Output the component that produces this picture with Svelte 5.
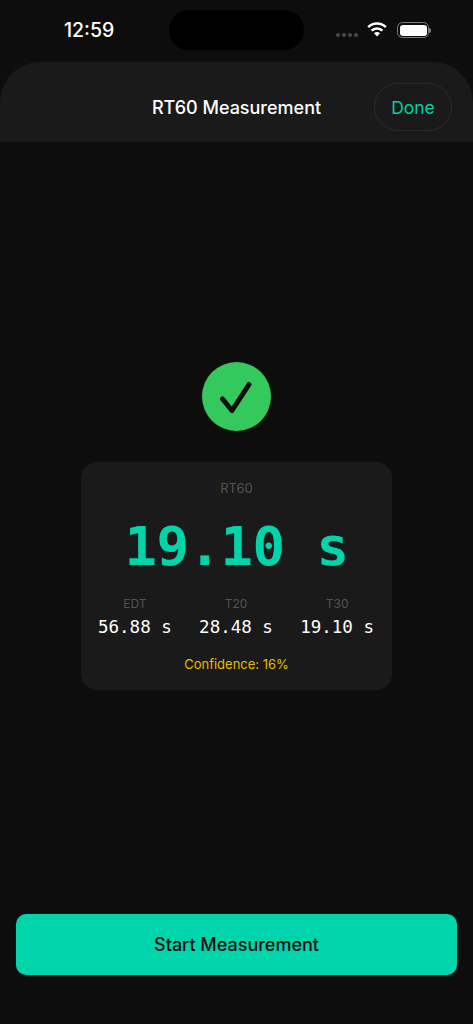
<script>
    const metrics = [
        { label: "EDT", value: "56.88 s" },
        { label: "T20", value: "28.48 s" },
        { label: "T30", value: "19.10 s" },
    ];
</script>

<div class="screen">
    <div class="status-bar">
        <span class="time">12:59</span>
        <div class="island"></div>
        <div class="status-icons">
            <div class="dots">
                <i></i><i></i><i></i><i></i>
            </div>
            <svg class="wifi" width="20" height="15" viewBox="0 0 20 15">
                <path d="M1.2 5.2a12.6 12.6 0 0 1 17.6 0" fill="none" stroke="#fff" stroke-width="2.5" />
                <path d="M4.6 8.6a7.8 7.8 0 0 1 10.8 0" fill="none" stroke="#fff" stroke-width="2.5" />
                <path d="M7 11.2a4.2 4.2 0 0 1 6 0L10 14.6z" fill="#fff" />
            </svg>
            <div class="battery">
                <div class="battery-body"><div class="battery-fill"></div></div>
                <div class="battery-cap"></div>
            </div>
        </div>
    </div>

    <header class="sheet-header">
        <h1>RT60 Measurement</h1>
        <button class="done">Done</button>
    </header>

    <main>
        <div class="check">
            <svg width="69" height="69" viewBox="0 0 69 69">
                <path d="M20.5 37l9.5 11.5L47 22.5" fill="none" stroke="#0d0d0d" stroke-width="5" stroke-linecap="round" stroke-linejoin="round" />
            </svg>
        </div>

        <section class="card">
            <div class="card-label">RT60</div>
            <div class="big-value">19.10 s</div>
            <div class="metrics">
                {#each metrics as m}
                    <div class="metric">
                        <span class="metric-label">{m.label}</span>
                        <span class="metric-value">{m.value}</span>
                    </div>
                {/each}
            </div>
            <div class="confidence">Confidence: 16%</div>
        </section>
    </main>

    <div class="footer">
        <button class="start">Start Measurement</button>
    </div>
</div>

<style>
    :global(body) {
        background: #0d0d0d;
    }

    .screen {
        width: 473px;
        height: 1024px;
        display: flex;
        flex-direction: column;
        background: #0d0d0d;
        font-family: Inter, "Noto Sans", sans-serif;
        overflow: hidden;
        position: relative;
    }

    .status-bar {
        height: 62px;
        flex: none;
        display: flex;
        justify-content: space-between;
        align-items: flex-start;
        position: relative;
    }

    .time {
        margin: 19px 0 0 64px;
        color: #fff;
        font-size: 19.5px;
        line-height: 23px;
        font-weight: 500;
    }

    .island {
        position: absolute;
        left: 169px;
        top: 10px;
        width: 135px;
        height: 40px;
        border-radius: 20px;
        background: #000;
    }

    .status-icons {
        display: flex;
        align-items: center;
        margin: 22px 42px 0 0;
    }

    .dots {
        display: flex;
        gap: 1.5px;
        margin: 10px 9px 0 0;
    }

    .dots i {
        width: 4.5px;
        height: 4.5px;
        border-radius: 50%;
        background: #4a4a4a;
    }

    .wifi {
        margin: -1px 10px 0 0;
    }

    .battery {
        display: flex;
        align-items: center;
    }

    .battery-body {
        width: 32px;
        height: 16px;
        box-sizing: border-box;
        border: 1.5px solid #7d7d7d;
        border-radius: 5.5px;
        padding: 1.5px;
    }

    .battery-fill {
        width: 100%;
        height: 100%;
        background: #fff;
        border-radius: 3px;
    }

    .battery-cap {
        width: 2px;
        height: 5px;
        background: #7d7d7d;
        border-radius: 0 2px 2px 0;
    }

    .sheet-header {
        height: 80px;
        flex: none;
        background: #1a1a1a;
        border-radius: 40px 40px 0 0;
        display: flex;
        align-items: center;
        justify-content: center;
        position: relative;
    }

    h1 {
        margin: 11px 0 0;
        color: #fff;
        font-size: 18px;
        line-height: 22px;
        font-weight: 500;
    }

    .done {
        position: absolute;
        right: 21px;
        top: 21px;
        width: 78px;
        height: 48px;
        padding: 0;
        background: transparent;
        border: 1px solid #2b2b2b;
        border-radius: 24px;
        color: #00cfa5;
        font: inherit;
        font-size: 17.5px;
    }

    main {
        flex: 1;
        display: flex;
        flex-direction: column;
        align-items: center;
        padding-top: 220px;
    }

    .check {
        width: 69px;
        height: 69px;
        border-radius: 50%;
        background: #34c95c;
    }

    .check svg {
        display: block;
    }

    .card {
        width: 311px;
        height: 228px;
        margin-top: 31px;
        box-sizing: border-box;
        padding-top: 18px;
        background: #1a1a1a;
        border-radius: 16px;
        display: flex;
        flex-direction: column;
        align-items: center;
    }

    .card-label {
        color: #525252;
        font-size: 13px;
        line-height: 16px;
    }

    .big-value {
        margin-top: 20px;
        color: #00d4aa;
        font-family: "DejaVu Sans Mono", monospace;
        font-size: 54px;
        line-height: 62px;
        font-weight: 700;
        letter-spacing: -0.5px;
    }

    .metrics {
        align-self: stretch;
        display: flex;
        justify-content: space-between;
        padding: 0 18px 0 17px;
        margin-top: 19px;
    }

    .metric {
        display: flex;
        flex-direction: column;
        align-items: center;
        gap: 5px;
    }

    .metric-label {
        color: #525252;
        font-size: 12px;
        line-height: 14px;
    }

    .metric-value {
        color: #fff;
        font-family: "DejaVu Sans Mono", monospace;
        font-size: 17.5px;
        line-height: 22px;
    }

    .confidence {
        margin-top: 18px;
        color: #e3bd00;
        font-size: 13px;
        line-height: 16px;
    }

    .footer {
        flex: none;
        padding: 0 16px 49px;
    }

    .start {
        display: block;
        width: 100%;
        height: 61px;
        padding: 0;
        background: #00d4aa;
        border: none;
        border-radius: 10px;
        color: #0d0d0d;
        font: inherit;
        font-size: 18px;
        font-weight: 500;
    }
</style>
